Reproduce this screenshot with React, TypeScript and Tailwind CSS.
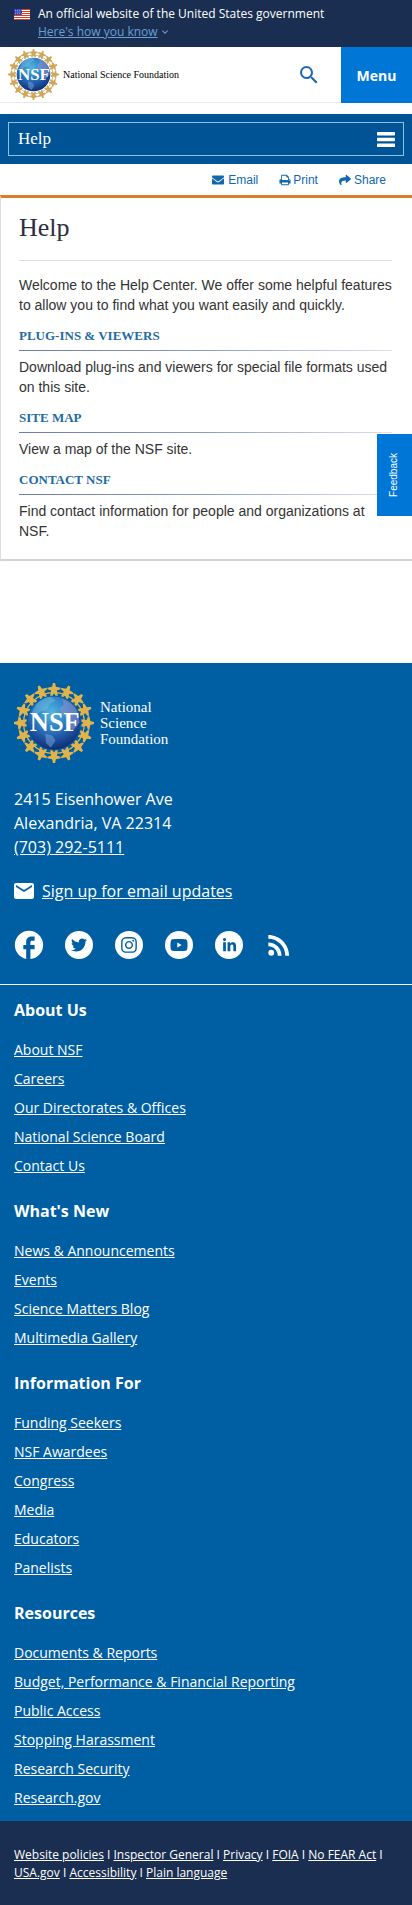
import { FaEnvelope, FaShare, FaTwitter, FaInstagram, FaYoutube, FaLinkedinIn } from 'react-icons/fa';
import { MdSearch, MdMail, MdExpandMore, MdFacebook, MdRssFeed } from 'react-icons/md';
import type { ReactNode } from 'react';

const groups = [
  { title: 'About Us', links: ['About NSF', 'Careers', 'Our Directorates & Offices', 'National Science Board', 'Contact Us'] },
  { title: "What's New", links: ['News & Announcements', 'Events', 'Science Matters Blog', 'Multimedia Gallery'] },
  { title: 'Information For', links: ['Funding Seekers', 'NSF Awardees', 'Congress', 'Media', 'Educators', 'Panelists'] },
  {
    title: 'Resources',
    links: ['Documents & Reports', 'Budget, Performance & Financial Reporting', 'Public Access', 'Stopping Harassment', 'Research Security', 'Research.gov'],
  },
];

const policies = ['Website policies', 'Inspector General', 'Privacy', 'FOIA', 'No FEAR Act', 'USA.gov', 'Accessibility', 'Plain language'];

const sections = [
  { title: 'PLUG-INS & VIEWERS', text: 'Download plug-ins and viewers for special file formats used on this site.' },
  { title: 'SITE MAP', text: 'View a map of the NSF site.' },
  { title: 'CONTACT NSF', text: 'Find contact information for people and organizations at NSF.' },
];

const figures = Array.from({ length: 16 }, (_, i) => i * 22.5);

function Seal({ id, gold, className }: { id: string; gold: string; className: string }) {
  return (
    <svg viewBox="0 0 100 100" className={className} aria-hidden="true">
      <defs>
        <radialGradient id={id} cx="45%" cy="30%" r="70%">
          <stop offset="0" stopColor="#52b6de" />
          <stop offset="0.4" stopColor="#2f86c8" />
          <stop offset="0.75" stopColor="#1d4f9f" />
          <stop offset="1" stopColor="#0e2f72" />
        </radialGradient>
      </defs>
      <circle cx="50" cy="50" r="38" fill="none" stroke={gold} strokeWidth="1.6" />
      {figures.map((a) => (
        <path
          key={a}
          transform={`rotate(${a} 50 50)`}
          fill={gold}
          d="M48.6 0h2.8l1 4.6 6 1.2-.4 1.9-4.4 1.6 1.2 6.5H52l-2-2.6-2 2.6h-2.8l1.2-6.5-4.4-1.6-.4-1.9 6-1.2z"
        />
      ))}
      <circle cx="50" cy="50" r="33" fill={`url(#${id})`} />
      <path d="M28 27q8-9 18-10l6 5-7 4-4 8-9 2-6 7-5-3z" fill="#7bbfe0" opacity=".45" />
      <path d="M60 20q13 3 19 15l3 14-8 10-7-5 2-10-9-4-3-8 5-5z" fill="#8e93cf" opacity=".6" />
      <path d="M39 63l9 3 4 6-6 9-6-6z" fill="#7fa5dc" opacity=".5" />
      <text x="51" y="60" textAnchor="middle" fontFamily="Liberation Serif, serif" fontWeight="700" fontSize="33" fill="#fff">
        NSF
      </text>
    </svg>
  );
}

function Flag() {
  return (
    <svg viewBox="0 0 16 11" className="mt-1 h-[11px] w-4 shrink-0" aria-hidden="true">
      <path fill="#fff" d="M0 0h16v11H0z" />
      <path stroke="#db3e1f" d="M0 .5h16M0 2.5h16M0 4.5h16M0 6.5h16M0 8.5h16M0 10.5h16" />
      <path fill="#1e33b1" d="M0 0h8v6H0z" />
      <path stroke="#fff" strokeWidth=".8" strokeDasharray="1 1" d="M.8 1.2h7M1.4 3h6M.8 4.8h7" />
    </svg>
  );
}

function MenuIcon() {
  return (
    <svg viewBox="0 0 18 15" className="h-[15px] w-[18px]" fill="currentColor" aria-hidden="true">
      <rect width="18" height="3.4" rx=".6" />
      <rect y="5.8" width="18" height="3.4" rx=".6" />
      <rect y="11.6" width="18" height="3.4" rx=".6" />
    </svg>
  );
}

function PrintIcon() {
  return (
    <svg viewBox="0 0 1664 1792" className="h-3 w-3" fill="currentColor" aria-hidden="true">
      <path d="M384 1536h896v-256h-896v256zM384 896h896v-384h-160q-40 0-68-28t-28-68v-160h-640v640zM1536 960q0-26-19-45t-45-19-45 19-19 45 19 45 45 19 45-19 19-45zM1664 960v416q0 13-9.5 22.5t-22.5 9.5h-224v160q0 40-28 68t-68 28h-960q-40 0-68-28t-28-68v-160h-224q-13 0-22.5-9.5t-9.5-22.5v-416q0-79 56.5-135.5t135.5-56.5h64v-544q0-40 28-68t68-28h672q40 0 88 20t76 48l152 152q28 28 48 76t20 88v256h64q79 0 135.5 56.5t56.5 135.5z" />
    </svg>
  );
}

function Social({ label, children }: { label: string; children: ReactNode }) {
  return (
    <a href="#" aria-label={label} className="flex size-7 items-center justify-center rounded-full bg-white text-[#005ea2]">
      {children}
    </a>
  );
}

export default function App() {
  return (
    <div className="relative bg-white font-['Open_Sans',sans-serif]">
      <section aria-label="Official government website" className="flex gap-2 bg-[#192e51] px-3.5 pt-[5px] pb-[7px] text-xs text-white">
        <Flag />
        <div className="flex flex-col items-start leading-[17px]">
          <p className="leading-[18px]">An official website of the United States government</p>
          <button className="flex items-center text-[#6a9fd6]">
            <span className="underline">Here's how you know</span>
            <MdExpandMore className="ml-px size-3" />
          </button>
        </div>
      </section>

      <header className="flex h-14 items-stretch">
        <a href="#" className="flex items-center gap-1 border-b border-[#e8e8e8] pl-2">
          <Seal id="globe-header" gold="#cfa75a" className="size-[51px]" />
          <span className="font-['Liberation_Serif',serif] text-[10px] text-black">National Science Foundation</span>
        </a>
        <button aria-label="Search" className="flex flex-1 items-center justify-end border-b border-[#e8e8e8] pr-5 text-[#1b69ac]">
          <MdSearch className="size-6" />
        </button>
        <button className="w-[71px] bg-[#0076d6] pt-0.5 text-sm font-bold text-white">Menu</button>
      </header>

      <nav className="mt-[11px] bg-[#005496] p-2">
        <button className="flex h-[34px] w-full items-center justify-between border border-[#8cc1e6] pr-2 pl-[9px] text-white">
          <span className="font-['Liberation_Serif',serif] text-[17px] leading-5">Help</span>
          <MenuIcon />
        </button>
      </nav>

      <div className="flex h-[31px] items-center justify-end gap-[21px] pr-[26px] font-['Liberation_Sans',sans-serif] text-xs text-[#1268ae]">
        <a href="#" className="flex items-center gap-1">
          <FaEnvelope className="size-3" />
          Email
        </a>
        <a href="#" className="flex items-center gap-0.5">
          <PrintIcon />
          Print
        </a>
        <a href="#" className="flex items-center gap-[3px]">
          <FaShare className="size-3" />
          Share
        </a>
      </div>

      <main className="border-t-[3px] border-b-2 border-l border-t-[#d97d28] border-b-[#d3d3d3] border-l-[#dddddd] pr-5 pb-[18px] pl-[18px] font-['Liberation_Sans',sans-serif] text-sm leading-5 text-[#333333]">
        <h1 className="border-b border-[#dddddd] pt-[14px] pb-4 font-['Liberation_Serif',serif] text-[26px] leading-8 text-[#2e2e42]">Help</h1>
        <p className="mt-[14px]">Welcome to the Help Center. We offer some helpful features to allow you to find what you want easily and quickly.</p>
        {sections.map((s) => (
          <section key={s.title} className="mt-[11px]">
            <h2 className="font-['Liberation_Serif',serif] text-[13px] leading-5 font-bold text-[#1f6ba5]">
              <a href="#">{s.title}</a>
            </h2>
            <div className="mt-1 mb-1.5 h-px bg-linear-to-r from-[#6f7ab5] via-[#8f9cc0] to-[#dfe2ea]" />
            <p>{s.text}</p>
          </section>
        ))}
      </main>

      <button className="absolute top-[434px] right-0 flex h-[82px] w-[35px] items-center justify-center bg-[#0076d6] pr-0.5 font-['Liberation_Sans',sans-serif] text-[10px] text-white">
        <span className="rotate-180 [writing-mode:vertical-rl]">Feedback</span>
      </button>

      <footer className="mt-[102px] bg-[#005ea2] text-white">
        <div className="border-b border-white px-3.5 pt-5 pb-[25px]">
          <a href="#" className="flex items-center gap-1.5">
            <Seal id="globe-footer" gold="#e0b34c" className="size-20" />
            <span className="font-['Liberation_Serif',serif] text-[15px] leading-4">
              National
              <br />
              Science
              <br />
              Foundation
            </span>
          </a>
          <address className="mt-6 leading-6 not-italic">
            2415 Eisenhower Ave
            <br />
            Alexandria, VA 22314
            <br />
            <a href="#" className="underline">(703) 292-5111</a>
          </address>
          <a href="#" className="mt-5 flex items-center gap-1.5">
            <MdMail className="-ml-0.5 size-6" />
            <span className="leading-6 underline">Sign up for email updates</span>
          </a>
          <div className="mt-7 flex gap-[22px] pl-px">
            <a href="#" aria-label="Facebook" className="flex size-7 items-center justify-center">
              <MdFacebook className="size-[34px] shrink-0" />
            </a>
            <Social label="Twitter"><FaTwitter className="size-4" /></Social>
            <Social label="Instagram"><FaInstagram className="size-[18px]" /></Social>
            <Social label="YouTube"><FaYoutube className="size-[18px]" /></Social>
            <Social label="LinkedIn"><FaLinkedinIn className="size-[15px]" /></Social>
            <a href="#" aria-label="RSS" className="flex size-7 items-center justify-center">
              <MdRssFeed className="size-8 shrink-0" />
            </a>
          </div>
        </div>
        <div className="px-3.5 pt-[13px] pb-[9px]">
          {groups.map((g, i) => (
            <section key={g.title} className={i === 0 ? '' : 'mt-[19px]'}>
              <h3 className="leading-6 font-bold">{g.title}</h3>
              <ul className="mt-[13px] text-sm leading-[29px]">
                {g.links.map((l) => (
                  <li key={l}>
                    <a href="#" className="underline">{l}</a>
                  </li>
                ))}
              </ul>
            </section>
          ))}
        </div>
      </footer>

      <div className="bg-[#192e51] px-3.5 pt-[25px] pb-[23px] text-xs leading-[18px] text-white">
        {policies.map((p, i) => (
          <span key={p}>
            <a href="#" className="underline">{p}</a>
            {i < policies.length - 1 && ' I '}
          </span>
        ))}
      </div>
    </div>
  );
}
